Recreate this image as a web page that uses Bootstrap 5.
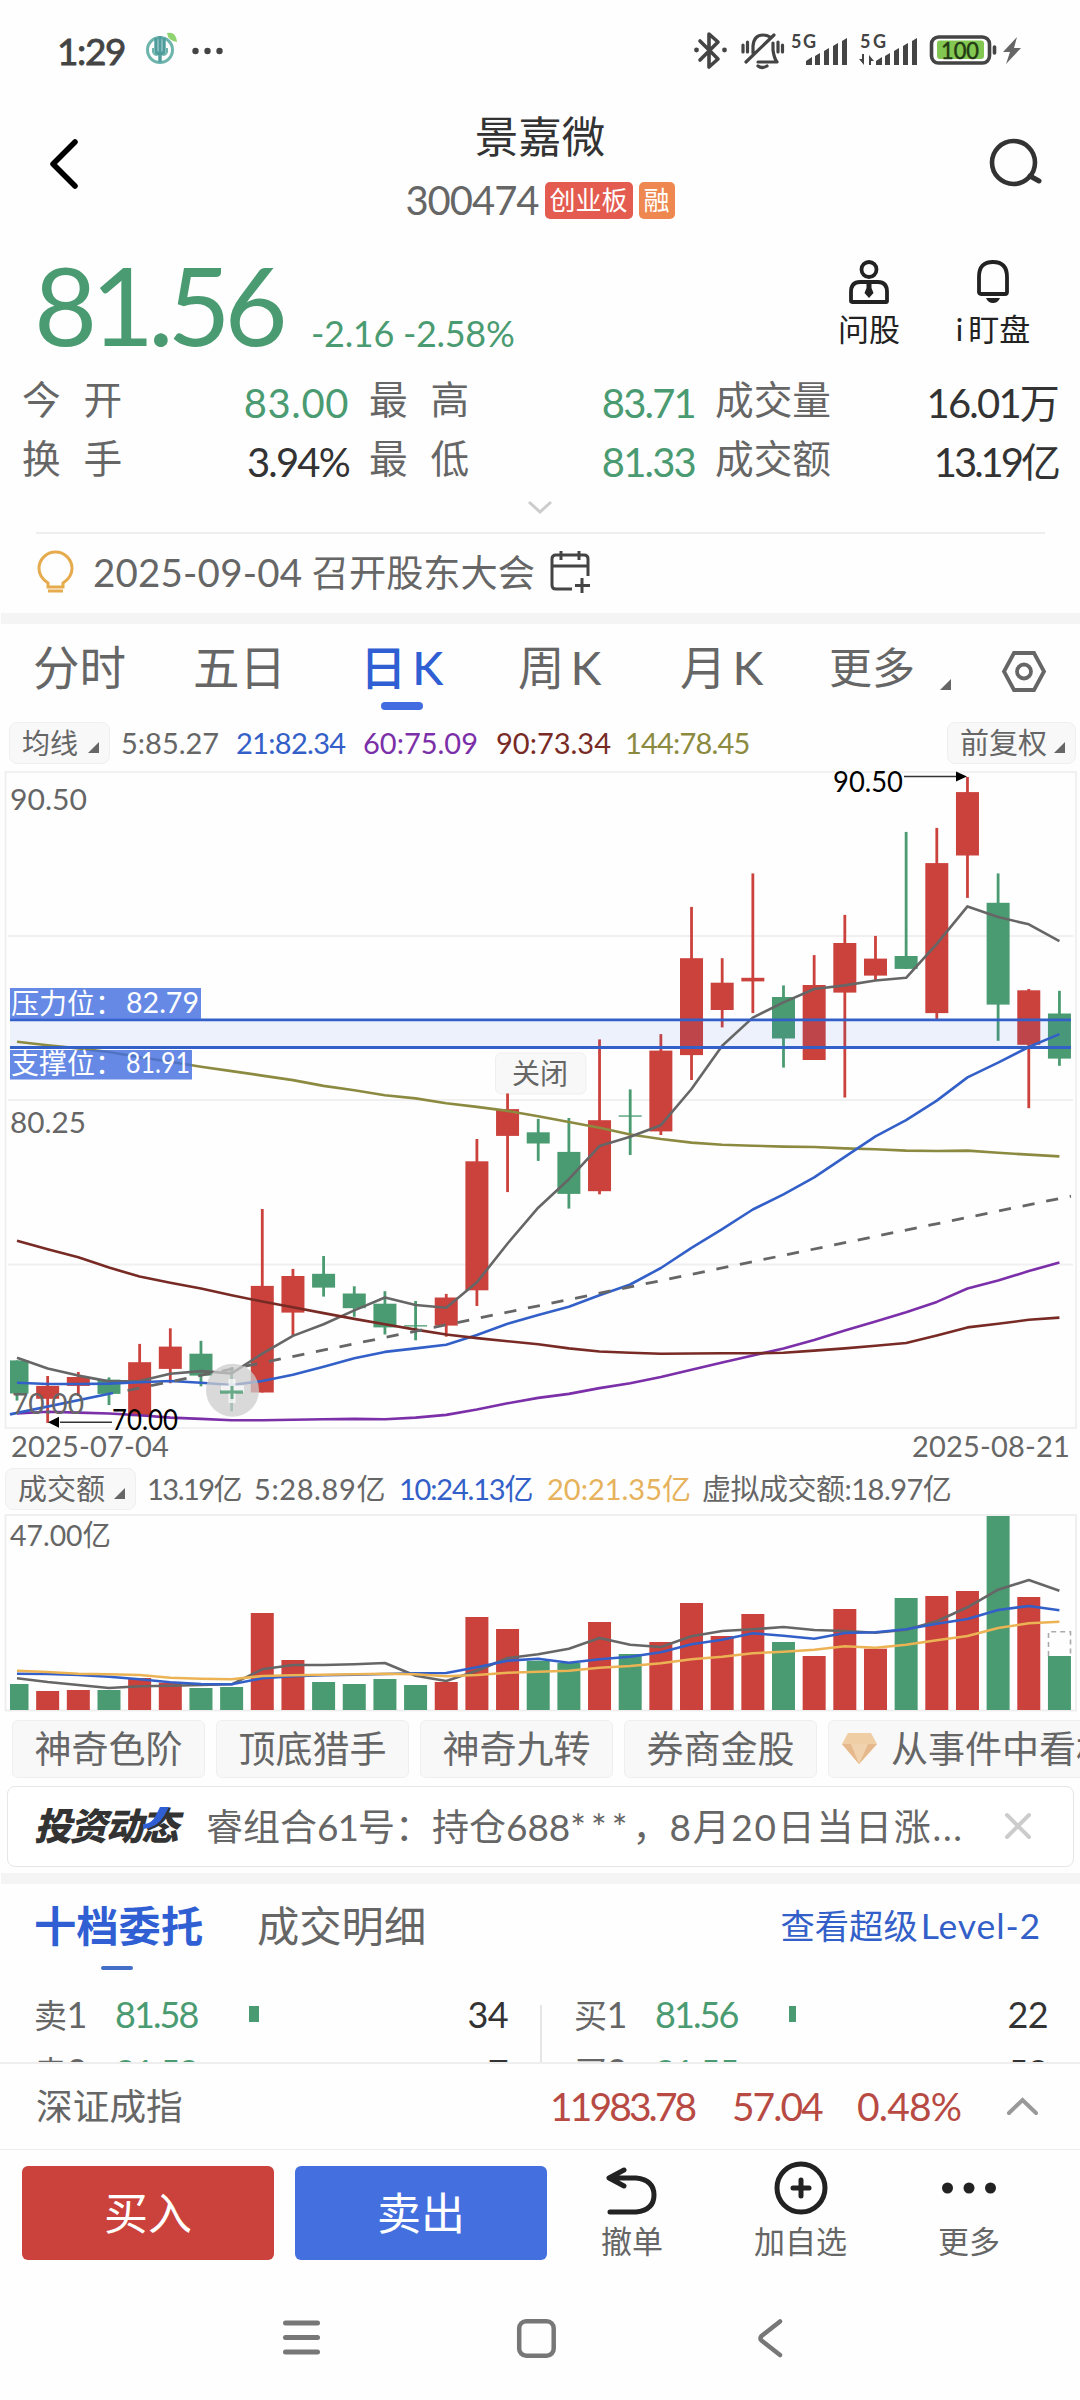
<!DOCTYPE html>
<html lang="zh-CN">
<head>
<meta charset="utf-8">
<meta name="viewport" content="width=device-width, initial-scale=1">
<title>景嘉微 300474</title>
<link href="https://cdn.jsdelivr.net/npm/bootstrap@5.3.0/dist/css/bootstrap.min.css" rel="stylesheet">
<style>
  :root { --up:#cb413c; --down:#4a9b71; --ink:#333; --soft:#666; --brand:#305fd3; }
  html, body { overflow:hidden; }
  body { width:1080px; height:2400px; margin:0; background:#fefefe; color:var(--soft);
    font-family:Lato,"Noto Sans CJK SC",sans-serif; line-height:1; }
  svg { display:block; flex:none; overflow:visible; }
  span { white-space:nowrap; }
  .fall { color:var(--down); }
  .ink { color:var(--ink); }
  .statusbar { height:100px; padding:0 57px 0 57px; color:#444; }
  .clock { font-size:37px; font-weight:400; letter-spacing:-1.4px; width:86px; -webkit-text-stroke:.8px #444; }
  .titlebar { height:140px; padding:0 38px 0 49px; }
  .stockname { font-size:43.5px; color:var(--ink); height:66px; line-height:66px; font-weight:400; }
  .code { font-size:40px; letter-spacing:-1px; }
  .tagbox { height:37px; border-radius:5px; color:#fff; font-size:26px; line-height:36px; padding:0 5px; }
  .quote { height:135px; padding-left:34px; }
  .price { font-size:109px; letter-spacing:-6.2px; line-height:127px; width:277px; }
  .delta { font-size:36px; letter-spacing:-.3px; }
  .tool { width:124px; font-size:31px; color:#222; padding-top:19px; }
  .stats { padding:0 22px; gap:20px; height:117px; }
  .stats > div > div { height:58.5px; }
  .lab { font-size:38.7px; position:relative; line-height:49px; }
  .val { font-size:40px; line-height:56px; letter-spacing:-1.8px; }
  .wide { letter-spacing:.6px; }
  .tight { letter-spacing:-3px; }
  .two { word-spacing:13px; }
  .hair { height:1.5px; background:#eee; }
  .notice { height:79.5px; padding:0 0 2px 37px; font-size:37px; }
  .band { height:11px; background:#f4f4f4; margin-left:1px; }
  .ktabs { height:96px; font-size:46.5px; word-spacing:-6px; }
  .ktabs > span { position:relative; height:90px; line-height:87px; }
  .on { color:var(--brand); font-weight:500; }
  .on i { position:absolute; left:21px; top:78px; width:42px; height:8px; border-radius:4px; background:#426de0; }
  .chip { background:#f8f8f8; border:1px solid #efefef; border-radius:8px; }
  .legend { height:43px; font-size:29px; }
  .legend .chip { height:42px; padding:0 10px 0 12px; }
  .dates { height:39px; padding:0 10px 4px 11px; font-size:29px; letter-spacing:.2px; }
  .tagrow { height:58px; margin-top:9px; padding-left:12px; gap:11px; font-size:37px; overflow:hidden; }
  .tagrow .chip { height:58px; width:193px; flex:none; border-radius:6px; padding-bottom:1px; }
  .news { height:81px; margin:8px 6px 6px 7px; border:1.5px solid #e6e6e6; border-radius:8px; background:#fff; padding:0 42px 1px 26px; font-size:37px; }
  .brandmark { font-size:37.5px; font-weight:900; font-style:italic; color:#333; letter-spacing:-1.8px; width:172px; position:relative; }
  .brandmark svg { position:absolute; left:109px; top:0; }
  .booktabs { height:108px; padding:0 39px 24px 34px; font-size:42.3px; position:relative; }
  .booktabs i { position:absolute; left:67px; top:61px; width:32px; height:4.5px; border-radius:3px; background:#4470c8; }
  .book { height:70px; overflow:hidden; }
  .book > div { width:540px; padding:0 32px 0 34px; }
  .book > div + div { position:relative; }
  .book > div + div::before { content:""; position:absolute; left:0; top:13px; bottom:0; width:1.5px; background:#e5e5e5; }
  .lvl { height:57.5px; padding-bottom:13px; line-height:40px; font-size:36px; letter-spacing:-.6px; }
  .lvl .who { width:81px; font-size:33px; }
  .lvl .who b { font-size:36px; font-weight:400; }
  .lvl .px { width:134px; letter-spacing:-1.9px; }
  .lvl .qty { height:16px; background:var(--down); }
  .indexrow { height:85px; padding:0 42px 0 36px; color:#b84a44; font-size:39px; letter-spacing:-.8px; }
  .actions { height:135px; padding:16px 0 0 22px; }
  .trade { width:252px; height:94px; border-radius:6px; font-size:44px; color:#fff; border:0; padding:0; line-height:92px; letter-spacing:0; }
  .act { font-size:31px; position:relative; height:100px; }
  .sysnav { height:116px; padding:0 0 10px; }
  .num { font-family:Lato,sans-serif; }
</style>
</head>
<body>
<header>
  <div class="statusbar d-flex align-items-center">
    <span class="clock">1:29</span>
    <svg width="36" height="36" viewBox="0 0 36 36" fill="none"><circle cx="17" cy="18" r="12.5" stroke="#6db5ac" stroke-width="3"/><path d="M17 4v26M13 6v13q0 3 4 3t4-3V6" stroke="#4e9d9c" stroke-width="3.4"/><path d="M10 16v4q1 3 4 3M24 16v4q-1 3-4 3" stroke="#6db5ac" stroke-width="2"/><path d="M24 1q9-2 10 9q-9-1-10-9z" fill="#8ed36f"/></svg>
    <svg width="32" height="8" viewBox="0 0 32 8" style="margin-left:13px" fill="#444"><circle cx="3.5" cy="5" r="3.2"/><circle cx="15.5" cy="5" r="3.2"/><circle cx="27.5" cy="5" r="3.2"/></svg>
    <svg class="ms-auto" width="330" height="44" viewBox="694 28 330 44" fill="none" stroke="#444" stroke-width="3.6" stroke-linecap="round" stroke-linejoin="round">
      <path d="M701 41l18 18-9 8V34l9 8-18 18"/><circle cx="697.500" cy="50" r="2.400" fill="#444" stroke="none"/><circle cx="725.500" cy="50" r="2.400" fill="#444" stroke="none"/>
      <g stroke-width="3.2"><path d="M754 53q0-3 0-7q1-11 10-11q4 0 7 2M774 43v7q1 8 4 12h-19M775 35l-28 27M744 45v7M748.500 42v10M783.500 45v7M779 42v10" /><path d="M759 66q4 3 9 0" /></g>
      <g stroke="none" fill="#444"><path d="M807 65v-4l6-4v8zM816 65v-9l5-3v12zM825 65V51l5-3v17zM834 65V46l5-3v22zM843 65V41l5-3v27z"/><path d="M877 65v-4l6-4v8zM886 65v-9l5-3v12zM895 65V51l5-3v17zM904 65V46l5-3v22zM913 65V41l5-3v27z"/><path d="M865 54v11l-5-6h3v-5zM870 65V55l5 6h-3v4z"/>
      <text x="792" y="48" font-size="18" font-weight="bold" textLength="25">5G</text><text x="861" y="48" font-size="18" font-weight="bold" textLength="26">5G</text></g>
      <rect x="932.500" y="37" width="58" height="26" rx="7"/><rect x="938" y="40.500" width="47" height="18.500" rx="3" fill="#82c751" stroke="none"/><path d="M995.500 47v6"/>
      <text x="942" y="58.500" font-size="24" fill="#233a14" stroke="#233a14" stroke-width=".5" textLength="38" lengthAdjust="spacingAndGlyphs">100</text>
      <path d="M1018 37l-14 15h7l-4 12 15-16h-7z" fill="#666" stroke="none"/>
    </svg>
  </div>
  <div class="titlebar d-flex justify-content-between">
    <svg width="53" height="50" viewBox="0 0 53 50" style="margin-top:39px"><path d="M26 3L4 25l22 22" fill="none" stroke="#000" stroke-width="5.500" stroke-linecap="round" stroke-linejoin="round"/></svg>
    <div class="d-flex flex-column align-items-center" style="padding:3px 11px 0 0">
      <h1 class="stockname m-0">景嘉微</h1>
      <div class="d-flex align-items-center" style="height:62px;gap:6px"><span class="code">300474</span><span class="tagbox" style="background:#e45b4f">创业板</span><span class="tagbox" style="background:#ee8850">融</span></div>
    </div>
    <svg width="53" height="50" viewBox="0 0 53 50" style="margin-top:38px" fill="none" stroke="#333" stroke-width="4.600"><circle cx="24.500" cy="24.500" r="21.500"/><path d="M41 38l9 5" stroke-linecap="round" stroke-width="5"/></svg>
  </div>
</header>

<section>
  <div class="quote d-flex fall">
    <span class="price">81.56</span>
    <span class="delta" style="padding-top:75px">-2.16 -2.58%</span>
    <div class="d-flex ms-auto" style="padding-right:25px">
      <div class="tool d-flex flex-column align-items-center"><svg width="40" height="45" viewBox="0 0 40 45" fill="none" stroke="#222" stroke-width="3.800"><circle cx="20" cy="10.500" r="7.500"/><path d="M2 42V33q0-10 9-10h18q9 0 9 10v9q0 1-1 1H3q-1 0-1-1z"/><path d="M17.500 24h5v5l2 5-4.500 5-4.500-5 2-5z" fill="#222" stroke="none"/></svg><span style="margin-top:10px">问股</span></div>
      <div class="tool d-flex flex-column align-items-center"><svg width="34" height="45" viewBox="0 0 34 45" fill="none" stroke="#222" stroke-width="3.800"><path d="M3 33V18Q3 3 17 3t14 15v15q0 2-2 2H5q-2 0-2-2z"/><path d="M10 39h14q-2 5-7 5t-7-5z" fill="#222" stroke="none"/></svg><span style="margin-top:10px;word-spacing:-3px">i 盯盘</span></div>
    </div>
  </div>
  <div class="stats d-flex">
    <div style="width:327px"><div class="d-flex justify-content-between"><span class="lab two">今 开</span><span class="val fall wide">83.00</span></div><div class="d-flex justify-content-between"><span class="lab two">换 手</span><span class="val ink">3.94%</span></div></div>
    <div style="width:326px"><div class="d-flex justify-content-between"><span class="lab two">最 高</span><span class="val fall">83.71</span></div><div class="d-flex justify-content-between"><span class="lab two">最 低</span><span class="val fall">81.33</span></div></div>
    <div style="width:343px"><div class="d-flex justify-content-between"><span class="lab">成交量</span><span class="val ink">16.01万</span></div><div class="d-flex justify-content-between"><span class="lab">成交额</span><span class="val ink tight">13.19亿</span></div></div>
  </div>
  <div class="d-flex justify-content-center" style="height:40px;padding-top:9px"><svg width="26" height="14" viewBox="0 0 26 14"><path d="M2 1l11 10L24 1" fill="none" stroke="#ccc" stroke-width="3"/></svg></div>
  <div class="hair" style="margin:0 35px 0 36px"></div>
  <div class="notice d-flex align-items-center">
    <svg width="38" height="44" viewBox="0 0 38 44" fill="none" stroke="#e6ab4c" stroke-width="3"><path d="M11 37v-4Q2 27 2 18.500a16.500 16.500 0 0 1 33 0Q35 27 26 33v4zM11 41h15"/></svg>
    <span style="margin-left:18px;font-size:37.200px"><span class="num" style="font-size:38.500px;letter-spacing:.2px">2025-09-04</span> 召开股东大会</span>
    <svg width="41" height="42" viewBox="0 0 41 42" style="margin-left:15px" fill="none" stroke="#444" stroke-width="3"><path d="M22 38H6q-4 0-4-4V8q0-4 4-4h28q4 0 4 4v17M2 15h36M11 0v9M29 0v9M32 27v15M25 34.500h15"/></svg>
  </div>
</section>

<div class="band"></div>

<section>
  <nav class="ktabs d-flex">
    <span style="margin-left:33px;width:160px">分时</span><span style="width:167px">五日</span><span class="on" style="width:158px">日 K<i></i></span><span style="width:162px">周 K</span><span style="width:149px">月 K</span><span style="font-size:43px;width:111px">更多</span>
    <svg width="11" height="11" viewBox="0 0 11 11" style="margin-top:55px"><path d="M0 11L11 0v11z" fill="#666"/></svg>
    <svg width="44" height="41" viewBox="0 0 44 41" style="margin:27px 0 0 51px" fill="none" stroke="#666" stroke-width="3.800"><path d="M12 2h20l10 18.500L32 39H12L2 20.500z"/><circle cx="22" cy="20.500" r="7"/></svg>
  </nav>
  <div class="legend d-flex align-items-center" style="padding:0 4px 0 9px;margin-top:1px">
    <div class="chip d-flex align-items-center" style="width:101px;font-size:28px">均线<svg class="ms-auto" width="11" height="11" viewBox="0 0 11 11" style="margin-top:9px"><path d="M0 11L11 0v11z" fill="#666"/></svg></div>
    <span style="margin-left:11px;width:115px">5:85.27</span><span style="width:127px;color:#3360c8;letter-spacing:-.7px">21:82.34</span><span style="width:133px;color:#7b2fa8">60:75.09</span><span style="width:129px;color:#782a25">90:73.34</span><span style="color:#8c8a40;letter-spacing:-.8px">144:78.45</span>
    <div class="chip d-flex align-items-center ms-auto" style="width:129px;font-size:29px">前复权<svg class="ms-auto" width="11" height="11" viewBox="0 0 11 11" style="margin-top:9px"><path d="M0 11L11 0v11z" fill="#666"/></svg></div>
  </div>
  <svg id="kline" width="1080" height="664" viewBox="0 764 1080 664" font-size="28" fill="#666"></svg>
  <div class="dates d-flex justify-content-between align-items-center"><span>2025-07-04</span><span>2025-08-21</span></div>
  <div class="legend d-flex align-items-center" style="padding-left:5px;margin-bottom:4px">
    <div class="chip d-flex align-items-center" style="width:131px;">成交额<svg class="ms-auto" width="11" height="11" viewBox="0 0 11 11" style="margin-top:9px"><path d="M0 11L11 0v11z" fill="#666"/></svg></div>
    <span style="margin-left:11px;width:107px;letter-spacing:-1.500px">13.19亿</span><span style="width:145px;letter-spacing:.6px">5:28.89亿</span><span style="width:148px;color:#3360c8;letter-spacing:-1.200px">10:24.13亿</span><span style="width:155px;color:#e6b25c">20:21.35亿</span><span style="letter-spacing:-.5px">虚拟成交额:18.97亿</span>
  </div>
  <svg id="volume" width="1080" height="197" viewBox="0 1514 1080 197" font-size="29" fill="#666"></svg>
  <div class="tagrow d-flex">
    <div class="chip d-flex align-items-center justify-content-center">神奇色阶</div><div class="chip d-flex align-items-center justify-content-center">顶底猎手</div><div class="chip d-flex align-items-center justify-content-center">神奇九转</div><div class="chip d-flex align-items-center justify-content-center">券商金股</div>
    <div class="chip d-flex align-items-center" style="width:300px;padding-left:13px"><svg width="35" height="31" viewBox="0 0 35 31"><path d="M6 0h23l6 11-18 20L0 11z" fill="#efcda5"/><path d="M0 11h35L17 31z" fill="#e5b98c"/><path d="M9 11h17l-9 20z" fill="#f1d2ae"/></svg><span style="margin-left:14px">从事件中看机会</span></div>
  </div>
  <div class="news d-flex align-items-center">
    <span class="brandmark">投资动态<svg width="28" height="22" viewBox="0 0 28 22"><path d="M0 17q9 0 13-9l4-8h9l-5 9q-7 12-21 13z" fill="#305fd3"/></svg></span>
    <span>睿组合<span style="letter-spacing:-1px">61</span>号：持仓688<span style="letter-spacing:5px">***</span>，<span style="letter-spacing:1.700px">8月20日当日涨...</span></span>
    <svg class="ms-auto" width="26" height="26" viewBox="0 0 26 26"><path d="M2 2l22 22M24 2L2 24" stroke="#ccc" stroke-width="4" stroke-linecap="round"/></svg>
  </div>
</section>

<div class="band"></div>

<section>
  <div class="booktabs d-flex align-items-center">
    <span class="on" style="font-weight:700;width:223px;position:relative">十档委托<i style="left:67px"></i></span><span>成交明细</span><span class="ms-auto" style="font-size:34.300px;color:#3360c8">查看超级<span style="font-size:35.500px;letter-spacing:.9px;margin-left:3px">Level-2</span></span>
  </div>
  <div class="book d-flex">
    <div>
      <div class="lvl d-flex align-items-center"><span class="who">卖<b>1</b></span><span class="px fall">81.58</span><span class="qty" style="width:10px"></span><span class="ms-auto ink">34</span></div>
      <div class="lvl d-flex align-items-center"><span class="who">卖<b>2</b></span><span class="px fall">81.59</span><span class="ms-auto ink">7</span></div>
    </div>
    <div>
      <div class="lvl d-flex align-items-center"><span class="who">买<b>1</b></span><span class="px fall">81.56</span><span class="qty" style="width:7px"></span><span class="ms-auto ink">22</span></div>
      <div class="lvl d-flex align-items-center"><span class="who">买<b>2</b></span><span class="px fall">81.55</span><span class="ms-auto ink">58</span></div>
    </div>
  </div>
</section>

<footer>
  <div class="hair"></div>
  <div class="indexrow d-flex align-items-center">
    <span style="font-size:36.700px;letter-spacing:0;color:#666;width:514px">深证成指</span><span style="width:182px;letter-spacing:-2.900px">11983.78</span><span style="width:125px;letter-spacing:-2px">57.04</span><span>0.48%</span>
    <svg class="ms-auto" width="31" height="18" viewBox="0 0 31 18"><path d="M2 16L15.500 3 29 16" fill="none" stroke="#999" stroke-width="4" stroke-linecap="round"/></svg>
  </div>
  <div class="hair"></div>
  <div class="actions d-flex">
    <button class="trade btn" style="background:#cb413c">买入</button>
    <button class="trade btn" style="background:#446fdf;margin-left:21px">卖出</button>
    <div class="act d-flex flex-column align-items-center justify-content-between" style="width:170px"><svg width="52" height="54" viewBox="0 0 52 54" fill="none" stroke="#222" stroke-width="5" stroke-linecap="round" stroke-linejoin="round"><path d="M18 4L3 12l15 8M5 12h25q18 2 18 17T30 46H4"/></svg><span style="height:40px">撤单</span></div>
    <div class="act d-flex flex-column align-items-center justify-content-between" style="width:167px"><svg width="54" height="54" viewBox="0 0 54 54" fill="none" stroke="#222" stroke-width="5" stroke-linecap="round" style="margin-top:-5px"><circle cx="27" cy="27" r="24"/><path d="M27 19v16M19 27h16"/></svg><span style="height:40px">加自选</span></div>
    <div class="act d-flex flex-column align-items-center justify-content-between" style="width:170px"><svg width="54" height="54" viewBox="0 0 54 54" fill="#222" style="margin-top:-5px"><circle cx="5.500" cy="27" r="5.500"/><circle cx="27" cy="27" r="5.500"/><circle cx="48.500" cy="27" r="5.500"/></svg><span style="height:40px">更多</span></div>
  </div>
  <div class="sysnav d-flex align-items-center" style="padding-left:283px">
    <svg width="37" height="36" viewBox="0 0 37 36" stroke="#777" stroke-width="5" stroke-linecap="round"><path d="M2.500 3h32M2.500 17.500h32M2.500 32h32"/></svg>
    <svg width="39" height="39" viewBox="0 0 39 39" style="margin-left:197px" fill="none" stroke="#777" stroke-width="4.500"><rect x="2.200" y="2.200" width="34.500" height="34.500" rx="7"/></svg>
    <svg width="25" height="39" viewBox="0 0 25 39" style="margin-left:202px" fill="none" stroke="#777" stroke-width="4.500" stroke-linecap="round" stroke-linejoin="round"><path d="M22 2.500L3.500 17q-2 2.500 0 4.500L22 36"/></svg>
  </div>
</footer>

<script>
  const UP = '#cb413c', DOWN = '#4a9b71', STEP = 30.66, X0 = 17;
  const cx = i => X0 + STEP * i;
  // [direction, high, body top, body bottom, low, volume top]
  const days = [
    [0,1360.4,1360.4,1393.5,1400.6,1684],[1,1376,1385.9,1398.8,1422.9,1691],[1,1372,1377,1385.9,1396,1690],[0,1377.4,1379.6,1393.9,1405,1690],
    [1,1343.9,1362.2,1416.2,1416.2,1678],[1,1328.3,1346.6,1368.9,1383.2,1682.7],[0,1340.8,1353.7,1375.6,1386.3,1688],[0,1367,1389.9,1393.9,1411.3,1687],
    [1,1209,1285.9,1392.5,1392.5,1613],[1,1268.9,1276,1312.6,1335,1660],[0,1256,1273.8,1287.6,1296.6,1682],[0,1286.3,1293.5,1308.2,1316.7,1684],
    [0,1291.2,1303.7,1327.4,1334.5,1679],[0,1301,1325.2,1326.5,1340.3,1685],[1,1293.9,1297.5,1325.6,1336.7,1682],[1,1139,1161.3,1290.3,1306,1617],
    [1,1093.5,1109.1,1135.9,1192.1,1629],[0,1118.9,1132.3,1143.5,1160.9,1660.7],[0,1118,1151.9,1193.9,1208.6,1663],[1,1039.4,1120.2,1191.2,1194.3,1622],
    [0,1089.4,1115.4,1116.7,1155,1654],[1,1034.1,1050.6,1131.4,1135,1642],[1,906.9,958.2,1055.1,1080,1603],[1,958.2,982.7,1010,1027.4,1636],
    [1,873.4,977.8,981.4,1013.1,1614],[0,985.4,997,1038.5,1067.6,1642],[1,955.1,985,1060,1060,1656],[1,914.9,943,992.6,1097.5,1609],
    [1,935.9,958.6,975.6,980,1648.7],[0,831.9,956,968.9,968.9,1598],[1,827.9,863.1,1013.1,1018.9,1596],[1,777,792.1,855.5,897.9,1591],
    [0,873.4,902.8,1004.6,1040.8,1516],[1,989,990.3,1044.8,1108.2,1597],[0,990.8,1013.5,1058.6,1065.8,1656]];
  const ma = {
    '#8c8a40':[1041.7,1045.2,1048.4,1052,1057.3,1061.8,1066.7,1071.1,1075.6,1080.1,1085.9,1090.3,1095.2,1098.4,1103.3,1106.9,1110.9,1116.2,1122,1127.8,1134.5,1139,1142.6,1144.8,1145.7,1146.6,1147,1148.4,1149.3,1150.6,1151,1150.6,1152.8,1154.6,1156.4],
    '#7b2fa8':[1413.5,1411.8,1412.6,1413.5,1415.3,1417.6,1418.9,1420.2,1420.2,1419.8,1419.3,1418.9,1419.3,1417.6,1414.9,1409.5,1403.3,1397.9,1393.9,1388.1,1383.2,1376.9,1369.8,1362.6,1355.5,1348.4,1339.9,1330.5,1321.6,1312.2,1301.9,1288.5,1280.5,1271.1,1262.6],
    '#666':[1357.7,1368.5,1375.6,1381.4,1381,1373.8,1371.1,1373.4,1353.7,1335.9,1324.2,1310.4,1297.5,1305,1307.7,1282.3,1243.5,1207.7,1179.2,1146.1,1136.8,1125.2,1089,1045.7,1017.6,1002.4,989,985.4,980.5,977.8,943.9,906.4,917.1,924.3,941.2],
    '#3360c8':[1382.7,1384,1384,1383.6,1382.3,1381,1382.7,1385,1381,1374.7,1366.7,1358.2,1351.9,1348.4,1344.8,1335,1323.8,1314.9,1306.8,1295.2,1284.5,1268,1247.9,1229.2,1209.5,1194.3,1177.4,1156.8,1136.3,1120.2,1100.6,1077.4,1062.7,1047,1034.1],
    '#782a25':[1240.8,1249.3,1257.3,1267.6,1276.5,1282.7,1288.5,1295.2,1301.5,1307.3,1313.1,1318.9,1324.2,1329.6,1334.5,1338.1,1341.2,1344.3,1348.4,1351.5,1352.8,1353.7,1353.5,1353.3,1353.3,1352.8,1350.6,1348.4,1345.7,1343,1335.4,1327.4,1323.8,1319.8,1317.6]
  };
  const vma = {
    '#666':[1678.3,1682,1685,1688,1686.3,1685.7,1685,1684.3,1669.3,1665,1665,1664.3,1663,1675.7,1681,1670.7,1658,1654.3,1648.7,1638,1644.7,1647,1636.3,1631,1629.3,1627,1630,1631,1632.7,1629.7,1621.3,1607.3,1589.7,1580,1590.7],
    '#3360c8':[1673.7,1674,1675,1676.7,1679.3,1682.3,1684,1684.3,1678.3,1676.3,1675.3,1674.7,1674,1673.3,1673,1667.3,1660.7,1658.7,1662.7,1659.3,1656.7,1652.3,1644.3,1639.7,1633.3,1635.7,1638.7,1633,1632.3,1629.3,1623.7,1619,1610,1606,1610.3],
    '#ecb355':[1670.7,1672,1673.7,1674.3,1675,1677.7,1678.7,1679.3,1676,1675.3,1674.7,1674.3,1673.7,1674.3,1676.3,1675,1672.7,1671.7,1670.7,1667.7,1666,1663.3,1659.3,1656.7,1653.3,1651.7,1649.7,1646.3,1647.7,1644.7,1640.3,1636,1628,1623.3,1621.7]
  };
  const lines = set => Object.entries(set).map(([c, ys]) =>
    `<polyline fill="none" stroke="${c}" stroke-width="2.6" stroke-linejoin="round" points="${ys.map((y, i) => cx(i).toFixed(1) + ',' + y).join(' ')}"/>`).join('');
  const left = i => Math.max(10, cx(i) - 11.5);
  const wide = i => cx(i) + 11.5 - left(i);
  const label = (x, y, t, w, extra = '') => `<text x="${x}" y="${y}" textLength="${w}" lengthAdjust="spacingAndGlyphs" ${extra}>${t}</text>`;

  let k = '<rect x="5.5" y="772" width="1070.500" height="656" fill="none" stroke="#eee" stroke-width="1.600"/>';
  k += '<path d="M8 936H1073M8 1100H1073M8 1264.500H1073" stroke="#f0f0f0" stroke-width="1.800"/>';
  k += '<rect x="495.500" y="1053" width="90.500" height="41" rx="6" fill="#f8f8f8" stroke="#efefef"/>' + label(512, 1084, '关闭', 56);
  days.forEach(([u, h, t, b, l], i) => {
    const c = u ? UP : DOWN;
    k += `<path d="M${cx(i)} ${h}V${l}" stroke="${c}" stroke-width="2.800"/><rect x="${left(i)}" y="${t}" width="${wide(i)}" height="${b - t}" fill="${c}"/>`;
  });
  k += '<rect x="10" y="1020" width="1061" height="27.500" fill="#446fdf" opacity=".09"/>' + lines(ma);
  k += '<path d="M10 1019.800H1071M10 1047.500H1071M10 1414.400L113 1393" stroke="#3360c8" stroke-width="2.800"/>';
  k += '<path d="M127.500 1390.500L1071 1196.100" stroke="#666" stroke-width="2.800" stroke-dasharray="12.200 11.850"/>';
  k += '<rect x="10" y="988" width="191" height="31.500" fill="#446fdf" opacity=".82"/><rect x="10" y="1050" width="182" height="29.500" fill="#446fdf" opacity=".82"/>';
  k += label(11, 1013.5, '压力位：', 112, 'fill="#fff"') + label(126, 1013, '82.79', 73, 'fill="#fff"');
  k += label(11, 1073.5, '支撑位：', 112, 'fill="#fff"') + label(126, 1073, '81.91', 64, 'fill="#fff"');
  k += '<circle cx="232.500" cy="1390.300" r="26.500" fill="#ccc" opacity=".75"/><path d="M232 1379v24M221 1389h23" stroke="#fff" stroke-width="7" opacity=".7"/><path d="M220 1392h23M232 1386v13" stroke="#4a9b71" stroke-width="3" opacity=".8"/>';
  k += label(10, 809.5, '90.50', 77) + label(10, 1132.5, '80.25', 76) + label(12, 1414, '70.00', 72);
  k += label(833, 792, '90.50', 70, 'fill="#000"') + label(112, 1430, '70.00', 66, 'fill="#000"');
  k += '<path d="M904 776.500H958M60 1422.200H112" stroke="#333" stroke-width="1.600"/><path d="M967 776.500l-11-5v10zM48 1422.200l11-5.500v11z" fill="#000"/>';
  document.getElementById('kline').innerHTML = k;

  let v = '<rect x="5.500" y="1515" width="1070.500" height="195.500" fill="none" stroke="#eee" stroke-width="1.800"/>';
  days.forEach((d, i) => { v += `<rect x="${left(i)}" y="${d[5]}" width="${wide(i)}" height="${1710 - d[5]}" fill="${d[0] ? UP : DOWN}"/>`; });
  v += '<path d="M1048.500 1656v-24.300h22v24.300" fill="none" stroke="#aaa" stroke-width="1.600" stroke-dasharray="5 4"/>' + lines(vma);
  v += label(10, 1546, '47.00亿', 101);
  document.getElementById('volume').innerHTML = v;
</script>
<script src="https://cdn.jsdelivr.net/npm/bootstrap@5.3.0/dist/js/bootstrap.bundle.min.js"></script>
</body>
</html>
